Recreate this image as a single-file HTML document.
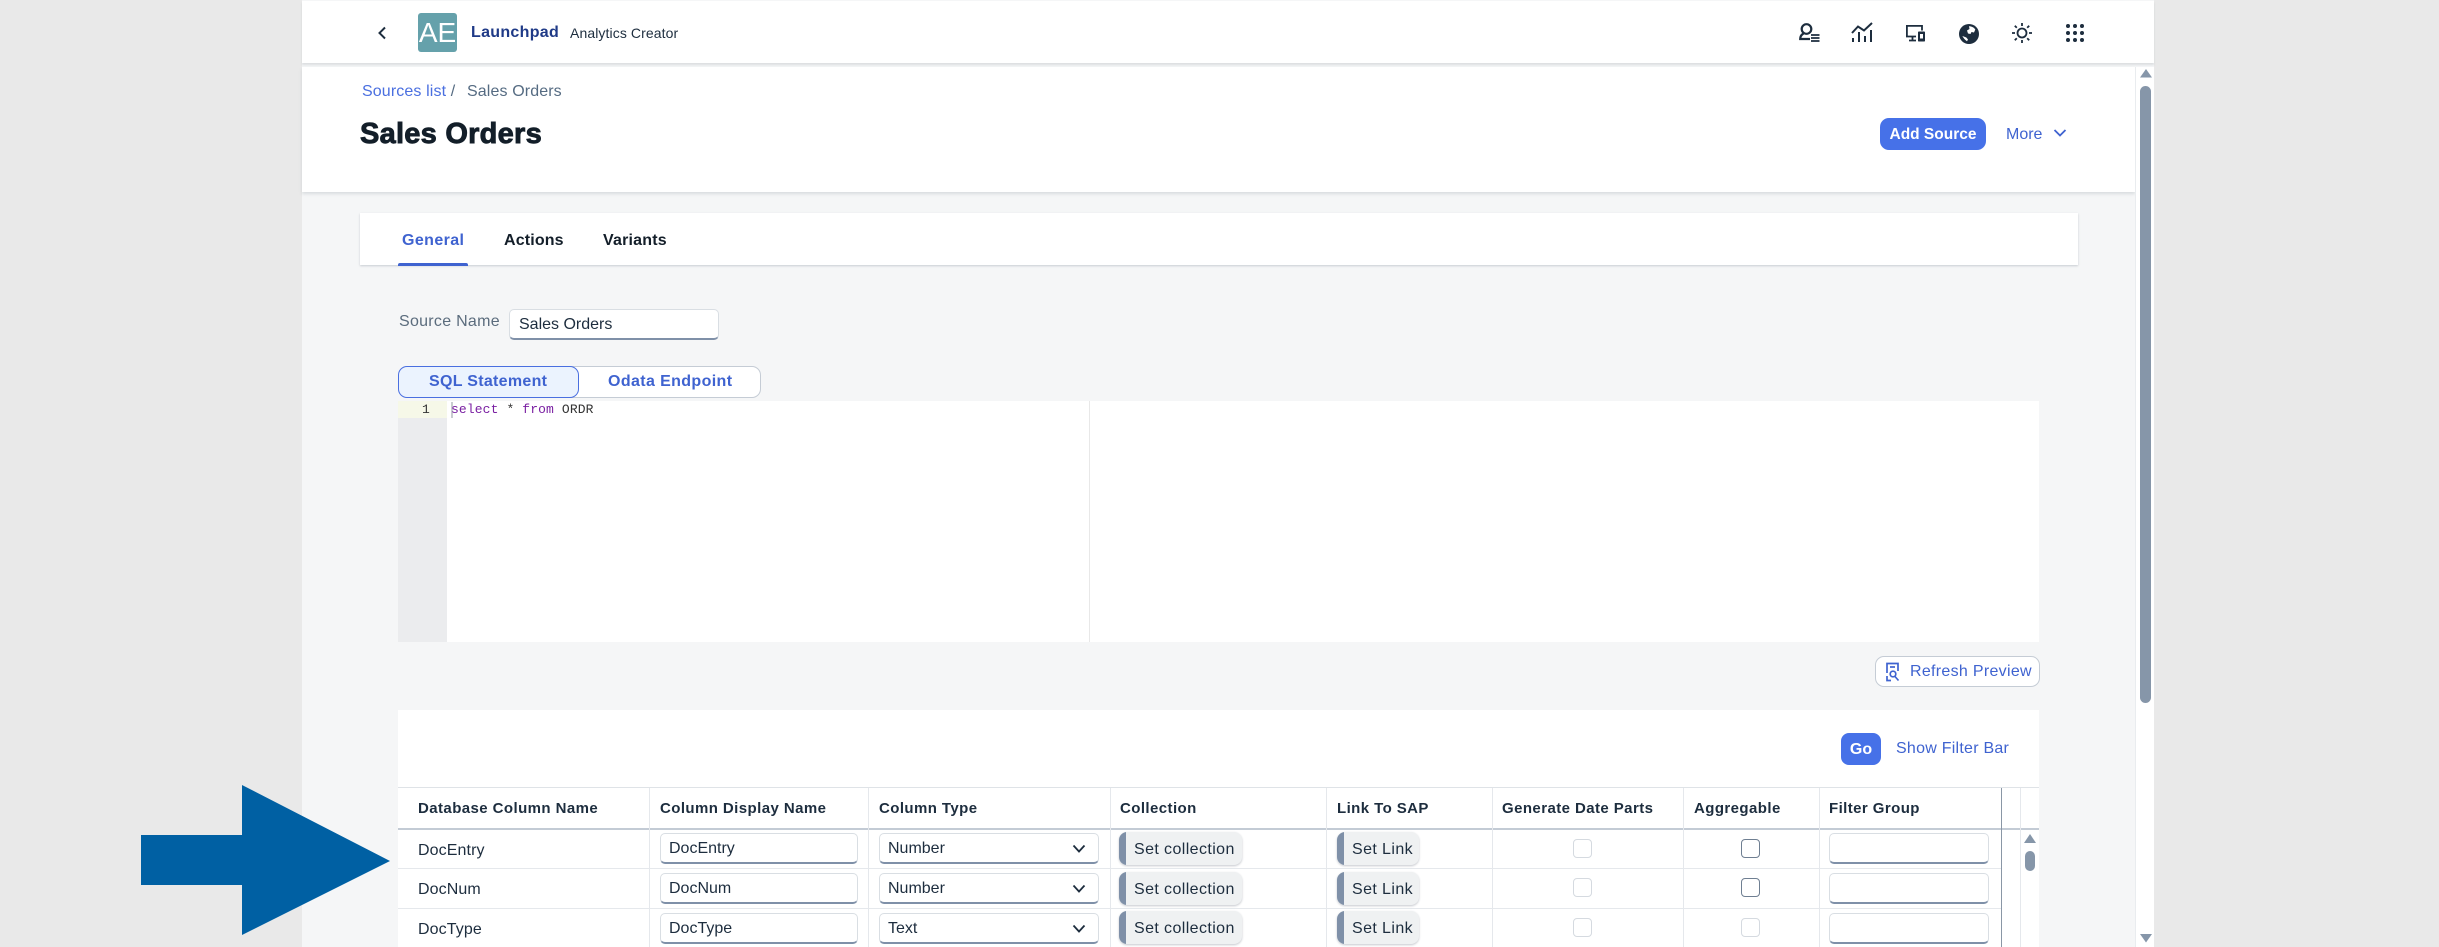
<!DOCTYPE html>
<html><head><meta charset="utf-8"><title>Sales Orders</title>
<style>
*{box-sizing:border-box}
html,body{margin:0;padding:0;width:2439px;height:947px;overflow:hidden;background:#e9e9e9;font-family:"Liberation Sans",sans-serif}
.a{position:absolute}
.t{position:absolute;white-space:nowrap;line-height:20px;height:20px}
.th{font-size:15px;font-weight:bold;color:#1d2d3e;letter-spacing:.42px;top:799px}
.td{font-size:16px;color:#1d2d3e;left:418px;letter-spacing:.1px}
.in{position:absolute;height:31px;background:#fff;border:1px solid #d9dee3;border-bottom:2px solid #7f90a8;border-radius:5px;font-size:16px;color:#1d2d3e;line-height:29px;padding-left:8px}
.btn{position:absolute;height:33px;background:#eff1f2;border-radius:8px;box-shadow:0 1px 2px rgba(60,70,90,.3);font-size:16px;color:#1d2d3e;line-height:35px;padding-left:15px;overflow:hidden;letter-spacing:.4px}
.btn:before{content:"";position:absolute;left:0;top:0;bottom:0;width:7px;background:#7f90a8}
.cb{position:absolute;width:19px;height:19px;border-radius:4px;background:#fff;border:1px solid #d5dae0}
.cb.d{border:1.5px solid #6f7f92}
.l{position:absolute;background:#e5e8ec}
svg{position:absolute;overflow:visible}
</style></head><body>

<!-- main panel -->
<div class="a" style="left:302px;top:0;width:1852px;height:947px;background:#f5f6f7"></div>
<!-- shell bar -->
<div class="a" style="left:302px;top:1px;width:1852px;height:62px;background:#fff;box-shadow:0 2px 2px rgba(120,130,140,.2)"></div>
<svg style="left:376px;top:26px" width="12" height="14" viewBox="0 0 12 14"><path d="M9 1.500 3.500 7 9 12.500" fill="none" stroke="#1d2d3e" stroke-width="2"/></svg>
<div class="a" style="left:418px;top:13px;width:39px;height:39px;background:#65a1ab;border-radius:3px;color:#fff;font-size:28px;line-height:40px;text-align:center">AE</div>
<div class="t" style="left:471px;top:23px;font-size:16px;font-weight:bold;color:#1f3a87;letter-spacing:.3px">Launchpad</div>
<div class="t" style="left:570px;top:23px;font-size:14px;color:#1d2d3e;letter-spacing:.1px">Analytics Creator</div>

<!-- shell icons -->
<svg style="left:1799px;top:23px" width="22" height="19" viewBox="0 0 22 19" fill="none" stroke="#1d2d3e" stroke-width="2.200"><circle cx="7.500" cy="6" r="4.800"/><path d="M4.500 10.500 C2 12 1.200 13.500 1.200 16 H11"/><path d="M12 12h8.500M12 15h8.500M12 18h8.500" stroke-width="1.800"/></svg>
<svg style="left:1851px;top:21px" width="24" height="24" viewBox="0 0 24 24" fill="none" stroke="#1d2d3e" stroke-width="2"><path d="M1 12 7 5.500 13 9.500 21 2"/><path d="M2 17v4M8 11v10M14 15v6M20 9v12"/></svg>
<svg style="left:1905px;top:24px" width="22" height="18" viewBox="0 0 22 18" fill="none" stroke="#1d2d3e" stroke-width="1.800"><path d="M11 12.500H1.900V1.900H17V6.500"/><path d="M7.500 12.500v3.500M4 16.500h7"/><rect x="13" y="7.500" width="7" height="10" rx=".8" fill="#1d2d3e" stroke="none"/><rect x="15" y="10" width="3" height="4.500" fill="#fff" stroke="none"/></svg>
<svg style="left:1959px;top:24px" width="20" height="20" viewBox="0 0 20 20"><circle cx="10" cy="10" r="10" fill="#1d2d3e"/><path d="M10 2.300C12.500 2.300 15 3.500 16.300 5.500L15 8.500 12.500 8 11.500 10 9 9.500 8 6.500 10.500 5Z" fill="#fff"/><path d="M3.500 12C4 13.500 5.800 15.800 8 17.200L9 15.500 7.300 13.500Z" fill="#fff"/></svg>
<svg style="left:2011px;top:22px" width="22" height="22" viewBox="0 0 22 22" fill="none" stroke="#1d2d3e" stroke-width="1.800"><circle cx="11" cy="11" r="4.500"/><path d="M11 1v3M11 18v3M1 11h3M18 11h3M3.800 3.800l2 2M16.200 16.200l2 2M3.800 18.200l2-2M16.200 5.800l2-2"/></svg>
<svg style="left:2065px;top:23px" width="20" height="20" viewBox="0 0 20 20" fill="#1d2d3e"><circle cx="3" cy="3" r="2"/><circle cx="10" cy="3" r="2"/><circle cx="17" cy="3" r="2"/><circle cx="3" cy="10" r="2"/><circle cx="10" cy="10" r="2"/><circle cx="17" cy="10" r="2"/><circle cx="3" cy="17" r="2"/><circle cx="10" cy="17" r="2"/><circle cx="17" cy="17" r="2"/></svg>

<!-- page header -->
<div class="a" style="left:302px;top:67px;width:1833px;height:125px;background:#fff;box-shadow:0 2px 3px rgba(120,130,140,.22)"></div>
<div class="t" style="left:362px;top:82px;font-size:16px;color:#4a6fe0;letter-spacing:.12px">Sources list <span style="color:#556b82">/</span></div>
<div class="t" style="left:467px;top:82px;font-size:16px;color:#556b82;letter-spacing:.12px">Sales Orders</div>
<div class="a" style="left:360px;top:114px;font-size:29px;line-height:40px;font-weight:bold;color:#131e29;white-space:nowrap;-webkit-text-stroke:.9px #131e29;letter-spacing:.25px">Sales Orders</div>
<div class="a" style="left:1880px;top:118px;width:106px;height:32px;background:#4671e8;border-radius:9px;color:#fff;font-weight:bold;font-size:15.500px;line-height:34px;text-align:center">Add Source</div>
<div class="t" style="left:2006px;top:125px;font-size:16px;color:#3f63d0">More</div>
<svg style="left:2053px;top:128px" width="14" height="10" viewBox="0 0 14 10"><path d="M1.500 2 7 7.500 12.500 2" fill="none" stroke="#3f63d0" stroke-width="1.800"/></svg>

<!-- main scrollbar -->
<div class="a" style="left:2135px;top:67px;width:19px;height:880px;background:#fff"></div>
<div class="a" style="left:2135px;top:67px;width:1px;height:880px;background:#e9ecef"></div>
<svg style="left:2140px;top:69px" width="12" height="9" viewBox="0 0 12 9"><path d="M6 0 12 8.500H0Z" fill="#8696a9"/></svg>
<div class="a" style="left:2140px;top:86px;width:11px;height:617px;background:#8696a9;border-radius:6px"></div>
<svg style="left:2140px;top:934px" width="12" height="9" viewBox="0 0 12 9"><path d="M6 8.500 12 0H0Z" fill="#8696a9"/></svg>

<!-- tabs -->
<div class="a" style="left:360px;top:213px;width:1718px;height:52px;background:#fff;box-shadow:0 1px 2px rgba(100,110,125,.3)"></div>
<div class="t" style="left:402px;top:231px;font-size:16px;font-weight:bold;color:#3f63d0;letter-spacing:.4px">General</div>
<div class="t" style="left:504px;top:231px;font-size:16px;font-weight:bold;color:#131e29;letter-spacing:.15px">Actions</div>
<div class="t" style="left:603px;top:231px;font-size:16px;font-weight:bold;color:#131e29;letter-spacing:.2px">Variants</div>
<div class="a" style="left:398px;top:263px;width:70px;height:3px;background:#3f63d0;border-radius:2px 2px 0 0"></div>

<!-- source name -->
<div class="t" style="left:399px;top:312px;font-size:16px;color:#5b6c7d;letter-spacing:.28px">Source Name</div>
<div class="in" style="left:509px;top:309px;width:210px;padding-left:9px">Sales Orders</div>

<!-- segmented -->
<div class="a" style="left:570px;top:366px;width:191px;height:32px;background:#fff;border:1.500px solid #c5ccd5;border-radius:0 9px 9px 0"></div>
<div class="a" style="left:398px;top:366px;width:181px;height:32px;background:#ebf3fe;border:1.500px solid #4a6fe0;border-radius:9px"></div>
<div class="t" style="left:429px;top:372px;font-size:16px;font-weight:bold;color:#3f63d0;letter-spacing:.3px">SQL Statement</div>
<div class="t" style="left:608px;top:372px;font-size:16px;font-weight:bold;color:#3f63d0;letter-spacing:.38px">Odata Endpoint</div>

<!-- editor -->
<div class="a" style="left:398px;top:401px;width:1641px;height:241px;background:#fff"></div>
<div class="a" style="left:398px;top:401px;width:49px;height:241px;background:#ebecee"></div>
<div class="a" style="left:398px;top:401px;width:49px;height:17px;background:#f6f8e8"></div>
<div class="a" style="left:1089px;top:401px;width:1px;height:241px;background:#e8e8e8"></div>
<div class="a" style="left:451px;top:402px;width:2px;height:16px;background:#c8ccd0"></div>
<div class="t" style="left:422px;top:400px;font:13px/20px 'Liberation Mono',monospace;color:#333">1</div>
<div class="t" style="left:451px;top:400px;font:13px/20px 'Liberation Mono',monospace;color:#333;letter-spacing:.12px"><span style="color:#7a1fa2">select</span> * <span style="color:#7a1fa2">from</span> ORDR</div>

<!-- refresh -->
<div class="a" style="left:1875px;top:656px;width:165px;height:31px;background:#fff;border:1px solid #c5ccd5;border-radius:9px"></div>
<svg style="left:1884px;top:662px" width="18" height="20" viewBox="0 0 18 20" fill="none" stroke="#3f63d0" stroke-width="1.700"><path d="M3 11V1.500H14V9"/><path d="M6 5h5"/><path d="M3 14v4.500h4"/><circle cx="9" cy="12" r="2.800"/><path d="M11 14.500l3.500 4"/></svg>
<div class="t" style="left:1910px;top:662px;font-size:16px;color:#3f63d0;letter-spacing:.3px">Refresh Preview</div>

<!-- table panel -->
<div class="a" style="left:398px;top:710px;width:1641px;height:237px;background:#fff"></div>
<div class="a" style="left:1841px;top:733px;width:40px;height:32px;background:#4671e8;border-radius:8px;color:#fff;font-weight:bold;font-size:16px;line-height:33px;text-align:center">Go</div>
<div class="t" style="left:1896px;top:739px;font-size:16px;color:#3f63d0;letter-spacing:.25px">Show Filter Bar</div>

<div class="l" style="left:398px;top:787px;width:1641px;height:1px;background:#dfe3e7"></div>
<div class="l" style="left:398px;top:828px;width:1641px;height:2px;background:#c3cbd5"></div>
<div class="l" style="left:398px;top:868px;width:1603px;height:1px"></div>
<div class="l" style="left:398px;top:908px;width:1603px;height:1px"></div>
<div class="l" style="left:649px;top:788px;width:1px;height:159px"></div>
<div class="l" style="left:868px;top:788px;width:1px;height:159px"></div>
<div class="l" style="left:1110px;top:788px;width:1px;height:159px"></div>
<div class="l" style="left:1326px;top:788px;width:1px;height:159px"></div>
<div class="l" style="left:1492px;top:788px;width:1px;height:159px"></div>
<div class="l" style="left:1683px;top:788px;width:1px;height:159px"></div>
<div class="l" style="left:1819px;top:788px;width:1px;height:159px"></div>
<div class="l" style="left:2001px;top:788px;width:1px;height:159px;background:#8a97a6"></div>
<div class="l" style="left:2020px;top:788px;width:1px;height:159px"></div>

<div class="t th" style="left:418px">Database Column Name</div>
<div class="t th" style="left:660px">Column Display Name</div>
<div class="t th" style="left:879px">Column Type</div>
<div class="t th" style="left:1120px">Collection</div>
<div class="t th" style="left:1337px">Link To SAP</div>
<div class="t th" style="left:1502px">Generate Date Parts</div>
<div class="t th" style="left:1694px">Aggregable</div>
<div class="t th" style="left:1829px">Filter Group</div>

<!-- row 1 -->
<div class="t td" style="top:841px">DocEntry</div>
<div class="in" style="left:660px;top:833px;width:198px">DocEntry</div>
<div class="in" style="left:879px;top:833px;width:220px">Number</div>
<svg style="left:1072px;top:844px" width="14" height="10" viewBox="0 0 14 10"><path d="M1.500 1.500 7 7.500 12.500 1.500" fill="none" stroke="#1d2d3e" stroke-width="1.800"/></svg>
<div class="btn" style="left:1119px;top:832px;width:123px">Set collection</div>
<div class="btn" style="left:1337px;top:832px;width:82px">Set Link</div>
<div class="cb" style="left:1573px;top:839px"></div>
<div class="cb d" style="left:1741px;top:839px"></div>
<div class="in" style="left:1829px;top:833px;width:160px"></div>

<!-- row 2 -->
<div class="t td" style="top:880px">DocNum</div>
<div class="in" style="left:660px;top:873px;width:198px">DocNum</div>
<div class="in" style="left:879px;top:873px;width:220px">Number</div>
<svg style="left:1072px;top:884px" width="14" height="10" viewBox="0 0 14 10"><path d="M1.500 1.500 7 7.500 12.500 1.500" fill="none" stroke="#1d2d3e" stroke-width="1.800"/></svg>
<div class="btn" style="left:1119px;top:872px;width:123px">Set collection</div>
<div class="btn" style="left:1337px;top:872px;width:82px">Set Link</div>
<div class="cb" style="left:1573px;top:878px"></div>
<div class="cb d" style="left:1741px;top:878px"></div>
<div class="in" style="left:1829px;top:873px;width:160px"></div>

<!-- row 3 -->
<div class="t td" style="top:920px">DocType</div>
<div class="in" style="left:660px;top:913px;width:198px">DocType</div>
<div class="in" style="left:879px;top:913px;width:220px">Text</div>
<svg style="left:1072px;top:924px" width="14" height="10" viewBox="0 0 14 10"><path d="M1.500 1.500 7 7.500 12.500 1.500" fill="none" stroke="#1d2d3e" stroke-width="1.800"/></svg>
<div class="btn" style="left:1119px;top:911px;width:123px">Set collection</div>
<div class="btn" style="left:1337px;top:911px;width:82px">Set Link</div>
<div class="cb" style="left:1573px;top:918px"></div>
<div class="cb" style="left:1741px;top:918px"></div>
<div class="in" style="left:1829px;top:913px;width:160px"></div>

<!-- table scrollbar -->
<svg style="left:2024px;top:834px" width="12" height="10" viewBox="0 0 12 10"><path d="M6 0 12 9H0Z" fill="#8696a9"/></svg>
<div class="a" style="left:2025px;top:851px;width:10px;height:20px;background:#8696a9;border-radius:5px"></div>

<!-- arrow -->
<svg style="left:0;top:0" width="2439" height="947"><path d="M141 835H242V785L390 861 242 935V885H141Z" fill="#0060a3"/></svg>
</body></html>
